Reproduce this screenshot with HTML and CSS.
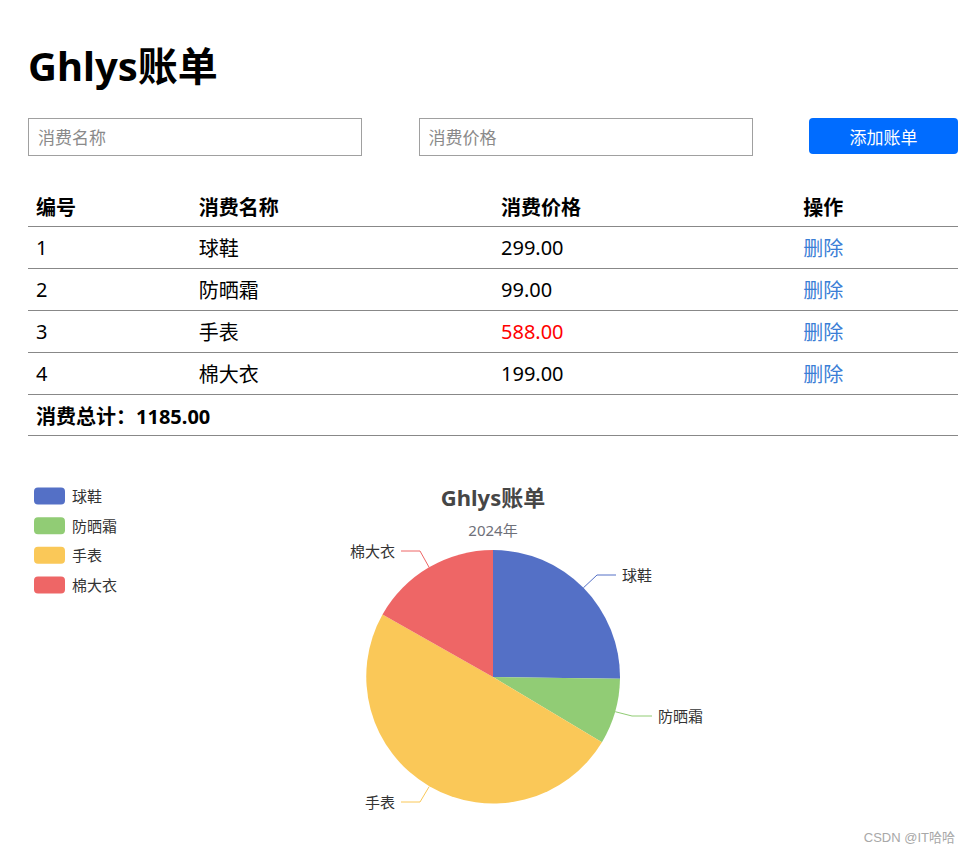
FILE: index.html
```html
<!DOCTYPE html>
<html lang="zh-CN">
<head>
<meta charset="UTF-8">
<meta name="viewport" content="width=device-width, initial-scale=1.0">
<title>Ghlys账单</title>
<link rel="stylesheet" href="styles.css">
</head>
<body>

<div class="app">
  <h1 class="title">Ghlys账单</h1>

  <div class="form-row">
    <input type="text" class="field" placeholder="消费名称">
    <input type="text" class="field" placeholder="消费价格">
    <button class="btn">添加账单</button>
  </div>

  <table class="bill-table">
    <thead>
      <tr>
        <th class="col-id">编号</th>
        <th class="col-name">消费名称</th>
        <th class="col-price">消费价格</th>
        <th class="col-op">操作</th>
      </tr>
    </thead>
    <tbody>
      <tr>
        <td>1</td>
        <td>球鞋</td>
        <td>299.00</td>
        <td><a href="#" class="del">删除</a></td>
      </tr>
      <tr>
        <td>2</td>
        <td>防晒霜</td>
        <td>99.00</td>
        <td><a href="#" class="del">删除</a></td>
      </tr>
      <tr>
        <td>3</td>
        <td>手表</td>
        <td class="red">588.00</td>
        <td><a href="#" class="del">删除</a></td>
      </tr>
      <tr>
        <td>4</td>
        <td>棉大衣</td>
        <td>199.00</td>
        <td><a href="#" class="del">删除</a></td>
      </tr>
    </tbody>
    <tfoot>
      <tr>
        <td colspan="4" class="total">消费总计：1185.00</td>
      </tr>
    </tfoot>
  </table>

  <div class="chart">
    <svg width="930" height="400" viewBox="0 0 930 400">
      <!-- legend -->
      <g class="legend">
        <rect x="6" y="33.5" width="31" height="17" rx="4" fill="#5470c6"/>
        <text x="44" y="42">球鞋</text>
        <rect x="6" y="63.2" width="31" height="17" rx="4" fill="#91cc75"/>
        <text x="44" y="71.7">防晒霜</text>
        <rect x="6" y="92.8" width="31" height="17" rx="4" fill="#fac858"/>
        <text x="44" y="101.3">手表</text>
        <rect x="6" y="122.5" width="31" height="17" rx="4" fill="#ee6666"/>
        <text x="44" y="131">棉大衣</text>
      </g>

      <text class="chart-title" x="465" y="43">Ghlys账单</text>
      <text class="chart-sub" x="465" y="76">2024年</text>

      <!-- pie -->
      <path d="M465,223 L465,96 A127,127 0 0 1 591.99,224.85 Z" fill="#5470c6"/>
      <path d="M465,223 L591.99,224.85 A127,127 0 0 1 573.96,288.23 Z" fill="#91cc75"/>
      <path d="M465,223 L573.96,288.23 A127,127 0 0 1 354.52,160.38 Z" fill="#fac858"/>
      <path d="M465,223 L354.52,160.38 A127,127 0 0 1 465,96 Z" fill="#ee6666"/>

      <!-- label lines -->
      <polyline points="555.4,133.8 569,121 588,121" stroke="#5470c6"/>
      <polyline points="587.2,257.7 604,262 624,262" stroke="#91cc75"/>
      <polyline points="401.1,332.7 392,348 373,348" stroke="#fac858"/>
      <polyline points="401.1,113.3 392,97 373,97" stroke="#ee6666"/>

      <g class="labels">
        <text x="594" y="121">球鞋</text>
        <text x="630" y="262">防晒霜</text>
        <text x="367" y="348" class="end">手表</text>
        <text x="367" y="97" class="end">棉大衣</text>
      </g>
    </svg>
  </div>
</div>

<div class="watermark">CSDN @IT哈哈</div>

</body>
</html>
```

FILE: styles.css
```css
body {
  margin: 0;
  padding: 0;
  font-family: "Noto Sans", "Noto Sans CJK SC", sans-serif;
  color: #000;
  background: #fff;
  overflow: hidden;
}

.app {
  width: 930px;
  margin-left: 28px;
}

.title {
  margin: 0;
  padding-top: 40px;
  font-size: 40px;
  line-height: 52px;
  font-weight: bold;
}

.form-row {
  display: flex;
  justify-content: space-between;
  align-items: flex-start;
  margin-top: 26px;
}

.field {
  box-sizing: border-box;
  width: 334px;
  height: 38px;
  border: 1px solid #a0a0a0;
  padding: 0 9px;
  font-family: inherit;
  font-size: 17px;
  outline: none;
}

.field::placeholder {
  color: #8a8a8a;
}

.btn {
  width: 149px;
  height: 36px;
  border: none;
  border-radius: 4px;
  background-color: #006cff;
  color: #fff;
  font-family: inherit;
  font-size: 17px;
  cursor: pointer;
}

.bill-table {
  width: 100%;
  margin-top: 30px;
  border-collapse: collapse;
  font-size: 20px;
}

.bill-table th,
.bill-table td {
  text-align: left;
  padding: 0 8px;
  height: 41px;
  border-bottom: 1px solid #888;
}

.bill-table th {
  font-weight: bold;
  height: 40px;
}

.col-id { width: 17.5%; }
.col-name { width: 32.5%; }
.col-price { width: 32.5%; }
.col-op { width: 17.5%; }

.red {
  color: #ff0000;
}

.del {
  color: #3b7ed6;
  text-decoration: none;
}

.bill-table .total {
  font-weight: bold;
  height: 40px;
}

.chart {
  margin-top: 18px;
}

.chart svg {
  display: block;
}

.chart text {
  font-family: "Noto Sans", "Noto Sans CJK SC", sans-serif;
  dominant-baseline: central;
}

.legend text {
  font-size: 15px;
  fill: #333;
}

.chart-title {
  font-size: 22px;
  font-weight: bold;
  fill: #464646;
  text-anchor: middle;
}

.chart-sub {
  font-size: 15px;
  fill: #6e7079;
  text-anchor: middle;
}

.chart polyline {
  fill: none;
  stroke-width: 1;
}

.labels text {
  font-size: 15px;
  fill: #333;
}

.labels .end {
  text-anchor: end;
}

.watermark {
  position: absolute;
  right: 15px;
  top: 827px;
  font-family: "Liberation Sans", "Noto Sans CJK SC", sans-serif;
  font-size: 13px;
  color: #a8a8a8;
}
```
